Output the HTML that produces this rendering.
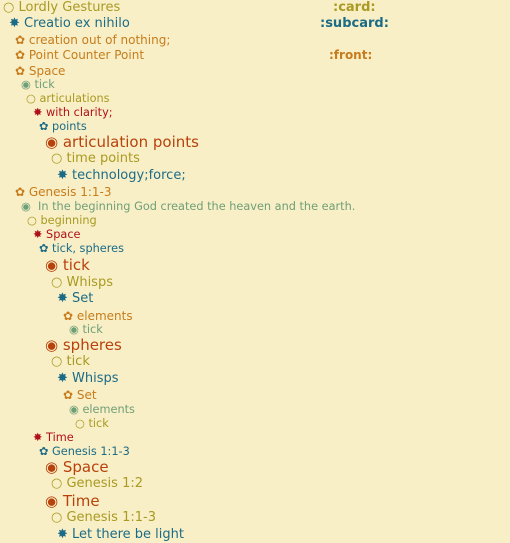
<!DOCTYPE html>
<html><head><meta charset="utf-8"><style>
html,body{margin:0;padding:0;background:#f9efc6;width:510px;height:543px;overflow:hidden}
body{position:relative;font-family:"DejaVu Sans","Liberation Sans",sans-serif}
.l{position:absolute;white-space:nowrap;height:18px;line-height:18px}
.o{color:#a89a22}.t{color:#1b6b87}.g{color:#c67c1c}.n{color:#6e9f78}.r{color:#b0101c}.x{color:#b7420c}
.s{font-size:11.3px}
.tag{position:absolute;font-weight:bold;white-space:nowrap;height:18px;line-height:18px}
</style></head><body>
<div class="l o" style="top:-1px;left:3px;font-size:13px">○ Lordly Gestures</div><div class="tag o" style="top:-1px;left:333px;font-size:13px">:card:</div>
<div class="l t" style="top:15px;left:9px;font-size:13px">✸ Creatio ex nihilo</div><div class="tag t" style="top:15px;left:320px;font-size:13px">:subcard:</div>
<div class="l g" style="top:31px;left:15px;font-size:12px">✿ creation out of nothing;</div>
<div class="l g" style="top:46px;left:15px;font-size:12px">✿ Point Counter Point</div><div class="tag g" style="top:46px;left:329px;font-size:12px">:front:</div>
<div class="l g" style="top:62px;left:15px;font-size:12px">✿ Space</div>
<div class="l n s" style="top:76px;left:21px">◉ tick</div>
<div class="l o s" style="top:90px;left:26px">○ articulations</div>
<div class="l r s" style="top:104px;left:33px">✸ with clarity;</div>
<div class="l t s" style="top:118px;left:39px">✿ points</div>
<div class="l x" style="top:133px;left:45px;font-size:15px">◉ articulation points</div>
<div class="l o" style="top:150px;left:51px;font-size:13px">○ time points</div>
<div class="l t" style="top:167px;left:57px;font-size:13px">✸ technology;force;</div>
<div class="l g" style="top:183px;left:15px;font-size:12px">✿ Genesis 1:1-3</div>
<div class="l n s" style="top:198px;left:21px">◉&nbsp; In the beginning God created the heaven and the earth.</div>
<div class="l o s" style="top:212px;left:27px">○ beginning</div>
<div class="l r s" style="top:226px;left:33px">✸ Space</div>
<div class="l t s" style="top:240px;left:39px">✿ tick, spheres</div>
<div class="l x" style="top:256px;left:45px;font-size:15px">◉ tick</div>
<div class="l o" style="top:274px;left:51px;font-size:13px">○ Whisps</div>
<div class="l t" style="top:290px;left:57px;font-size:13px">✸ Set</div>
<div class="l g" style="top:307px;left:63px;font-size:12px">✿ elements</div>
<div class="l n s" style="top:321px;left:69px">◉ tick</div>
<div class="l x" style="top:336px;left:45px;font-size:15px">◉ spheres</div>
<div class="l o" style="top:353px;left:51px;font-size:13px">○ tick</div>
<div class="l t" style="top:370px;left:57px;font-size:13px">✸ Whisps</div>
<div class="l g" style="top:386px;left:63px;font-size:12px">✿ Set</div>
<div class="l n s" style="top:401px;left:69px">◉ elements</div>
<div class="l o s" style="top:415px;left:75px">○ tick</div>
<div class="l r s" style="top:429px;left:33px">✸ Time</div>
<div class="l t s" style="top:443px;left:39px">✿ Genesis 1:1-3</div>
<div class="l x" style="top:458px;left:45px;font-size:15px">◉ Space</div>
<div class="l o" style="top:475px;left:51px;font-size:13px">○ Genesis 1:2</div>
<div class="l x" style="top:492px;left:45px;font-size:15px">◉ Time</div>
<div class="l o" style="top:509px;left:51px;font-size:13px">○ Genesis 1:1-3</div>
<div class="l t" style="top:526px;left:57px;font-size:13px">✸ Let there be light</div>
</body></html>
